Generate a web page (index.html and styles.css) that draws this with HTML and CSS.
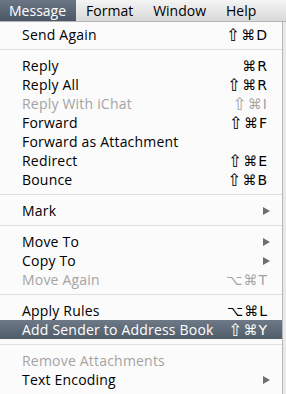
FILE: index.html
```
<!DOCTYPE html>
<html lang="en">
<head>
  <meta charset="UTF-8">
  <title>Message menu</title>
  <link rel="stylesheet" href="styles.css">
</head>
<body>
  <div class="menubar">
    <span class="titulo activo">Message</span>
    <span class="titulo">Format</span>
    <span class="titulo">Window</span>
    <span class="titulo">Help</span>
  </div>

  <div class="menu">
    <div class="item"><span>Send Again</span><span class="atajo"><b>⇧</b>⌘D</span></div>
    <div class="sep"></div>
    <div class="item"><span>Reply</span><span class="atajo">⌘R</span></div>
    <div class="item"><span>Reply All</span><span class="atajo"><b>⇧</b>⌘R</span></div>
    <div class="item off"><span>Reply With iChat</span><span class="atajo"><b>⇧</b>⌘I</span></div>
    <div class="item"><span>Forward</span><span class="atajo"><b>⇧</b>⌘F</span></div>
    <div class="item"><span>Forward as Attachment</span></div>
    <div class="item"><span>Redirect</span><span class="atajo"><b>⇧</b>⌘E</span></div>
    <div class="item"><span>Bounce</span><span class="atajo"><b>⇧</b>⌘B</span></div>
    <div class="sep"></div>
    <div class="item"><span>Mark</span><span class="flecha"></span></div>
    <div class="sep"></div>
    <div class="item"><span>Move To</span><span class="flecha"></span></div>
    <div class="item"><span>Copy To</span><span class="flecha"></span></div>
    <div class="item off"><span>Move Again</span><span class="atajo">⌥⌘T</span></div>
    <div class="sep"></div>
    <div class="item"><span>Apply Rules</span><span class="atajo">⌥⌘L</span></div>
    <div class="item sel"><span>Add Sender to Address Book</span><span class="atajo"><b>⇧</b>⌘Y</span></div>
    <div class="sep"></div>
    <div class="item off"><span>Remove Attachments</span></div>
    <div class="item"><span>Text Encoding</span><span class="flecha"></span></div>
  </div>
</body>
</html>
```

FILE: styles.css
```
body {
  margin: 0;
  background: #e9e9e9;
  font-family: "Open Sans", sans-serif;
  font-size: 14px;
  letter-spacing: 0.2px;
  color: #000;
  width: 286px;
  height: 394px;
  overflow: hidden;
}

.menubar {
  height: 22px;
  display: flex;
  background: linear-gradient(#f4f4f4, #d9d9d9);
  border-bottom: 1px solid #b5b5b5;
  box-sizing: border-box;
}

.titulo {
  padding: 0 10px;
  line-height: 22px;
  letter-spacing: 0;
}

.activo {
  background: linear-gradient(#6b7684, #4c5665);
  color: #fff;
  padding: 0 10px 0 9px;
}

.menu {
  width: 283px;
  background: #fbfbfb;
  border-right: 1px solid #b8b8b8;
  padding-top: 3px;
  height: 372px;
  box-sizing: border-box;
}

.item {
  display: flex;
  justify-content: space-between;
  align-items: center;
  height: 19px;
  padding: 0 15px 0 22px;
}

.atajo {
  font-family: "DejaVu Sans", sans-serif;
  font-size: 14px;
  letter-spacing: 1px;
  margin-right: -1px;
  display: flex;
  align-items: center;
}

.atajo b {
  font-weight: normal;
  font-size: 17px;
  line-height: 14px;
}

.off {
  color: #a4a4a4;
}

.sel {
  background: linear-gradient(#6e7987, #515c6a);
  color: #fff;
}

.sep {
  height: 1px;
  background: #dedede;
  margin: 5px 0 6px;
}

.flecha {
  width: 0;
  height: 0;
  border-left: 7px solid #6f6f6f;
  border-top: 4.5px solid transparent;
  border-bottom: 4.5px solid transparent;
  margin-right: -3px;
}
```
